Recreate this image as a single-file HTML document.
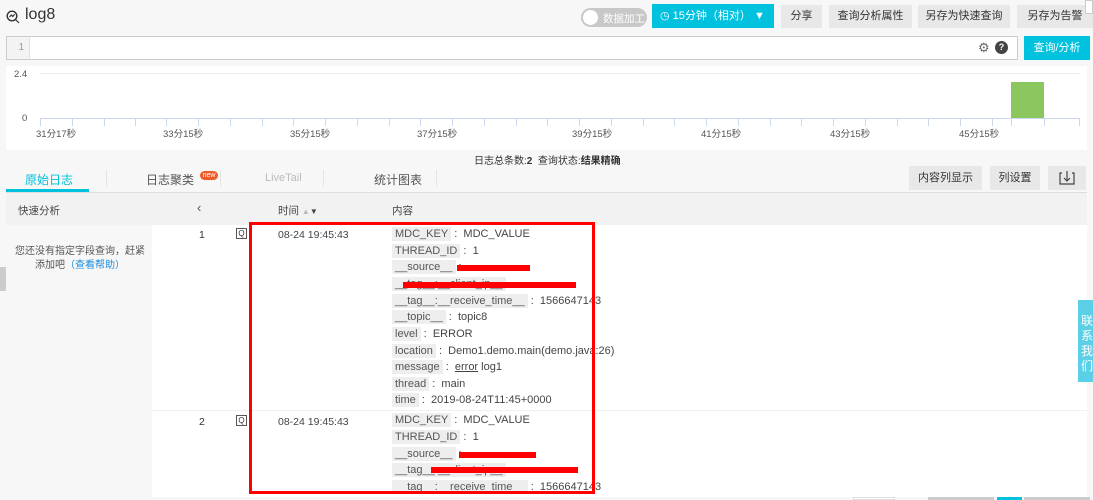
<!DOCTYPE html>
<html><head><meta charset="utf-8"><style>
*{box-sizing:border-box;margin:0;padding:0}
body{width:1093px;height:500px;overflow:hidden;background:#f7f7f7;font-family:"Liberation Sans","Noto Sans CJK SC",sans-serif;font-size:11px;color:#333;position:relative}
.a{position:absolute}
.btn{position:absolute;top:5px;height:23px;background:#e8e8e8;color:#333;font-size:11px;line-height:23px;text-align:center}
.key{background:#eee;padding:1px 3px;color:#555}
.row{position:absolute;left:392px;height:17px;line-height:17px;font-size:11px;color:#444;white-space:nowrap}
.redact{position:absolute;background:#f00;height:6px}
.tick{position:absolute;top:119px;width:1px;height:7px;background:#cdd6ef}
.lbl{position:absolute;top:126px;font-size:9.5px;color:#555}
</style></head><body>
<svg class="a" style="left:6px;top:10px" width="14" height="14" viewBox="0 0 14 14"><circle cx="6" cy="6" r="4.8" fill="none" stroke="#333" stroke-width="1.4"/><path d="M9.5 9.5L13 13M3.5 7l1.8-2 1.5 1.5 1.8-2.2" fill="none" stroke="#333" stroke-width="1.2"/></svg>
<div class="a" style="left:25px;top:6px;font-size:16px;color:#333">log8</div>
<div class="a" style="left:581px;top:8px;width:66px;height:19px;border-radius:10px;background:#c8c8c8"></div>
<div class="a" style="left:583px;top:10px;width:15px;height:15px;border-radius:50%;background:#fff"></div>
<div class="a" style="left:603px;top:11px;color:#fff;font-size:10.5px">数据加工</div>
<div class="a" style="left:652px;top:4px;width:122px;height:24px;background:#00c1de;color:#fff;font-size:11px;line-height:24px;padding-left:8px">&#9719; 15分钟（相对）&nbsp;▼</div>
<div class="btn" style="left:781px;width:41px">分享</div>
<div class="btn" style="left:829px;width:83px">查询分析属性</div>
<div class="btn" style="left:918px;width:92px">另存为快速查询</div>
<div class="btn" style="left:1017px;width:76px">另存为告警</div>
<div class="a" style="left:1085px;top:0;width:8px;height:14px;border:1px solid #ccc;background:#fff"></div>
<div class="a" style="left:6px;top:36px;width:1012px;height:24px;background:#fff;border:1px solid #ccc"></div>
<div class="a" style="left:7px;top:37px;width:23px;height:22px;background:#f3f3f3;border-right:1px solid #e0e0e0;color:#999;text-align:right;padding-right:5px;line-height:22px;font-size:10px">1</div>
<div class="a" style="left:978px;top:40px;font-size:13px;color:#666">⚙</div>
<div class="a" style="left:995px;top:41px;width:13px;height:13px;border-radius:50%;background:#444;color:#fff;font-size:9px;font-weight:bold;text-align:center;line-height:13px">?</div>
<div class="a" style="left:1024px;top:36px;width:66px;height:24px;background:#00c1de;color:#fff;line-height:24px;text-align:center">查询/分析</div>
<div class="a" style="left:6px;top:66px;width:1081px;height:84px;background:#fff"></div>
<div class="a" style="left:14px;top:69px;font-size:9.5px;color:#555">2.4</div>
<div class="a" style="left:22px;top:113px;font-size:9.5px;color:#555">0</div>
<div class="a" style="left:40px;top:73px;width:1040px;height:1px;background:#eee"></div>
<div class="a" style="left:40px;top:118px;width:1040px;height:1px;background:#cdd6ef"></div>
<div class="a" style="left:1011px;top:82px;width:33px;height:36px;background:#8bc65e"></div>
<div class="tick" style="left:40px"></div><div class="tick" style="left:72px"></div><div class="tick" style="left:104px"></div><div class="tick" style="left:135px"></div><div class="tick" style="left:166px"></div><div class="tick" style="left:198px"></div><div class="tick" style="left:230px"></div><div class="tick" style="left:262px"></div><div class="tick" style="left:293px"></div><div class="tick" style="left:325px"></div><div class="tick" style="left:357px"></div><div class="tick" style="left:389px"></div><div class="tick" style="left:420px"></div><div class="tick" style="left:452px"></div><div class="tick" style="left:484px"></div><div class="tick" style="left:516px"></div><div class="tick" style="left:547px"></div><div class="tick" style="left:579px"></div><div class="tick" style="left:611px"></div><div class="tick" style="left:643px"></div><div class="tick" style="left:674px"></div><div class="tick" style="left:706px"></div><div class="tick" style="left:738px"></div><div class="tick" style="left:770px"></div><div class="tick" style="left:801px"></div><div class="tick" style="left:833px"></div><div class="tick" style="left:865px"></div><div class="tick" style="left:897px"></div><div class="tick" style="left:928px"></div><div class="tick" style="left:960px"></div><div class="tick" style="left:992px"></div><div class="tick" style="left:1011px"></div><div class="tick" style="left:1044px"></div><div class="tick" style="left:1079px"></div>
<div class="lbl" style="left:36px">31分17秒</div><div class="lbl" style="left:163px">33分15秒</div><div class="lbl" style="left:290px">35分15秒</div><div class="lbl" style="left:417px">37分15秒</div><div class="lbl" style="left:572px">39分15秒</div><div class="lbl" style="left:701px">41分15秒</div><div class="lbl" style="left:830px">43分15秒</div><div class="lbl" style="left:959px">45分15秒</div>
<div class="a" style="left:474px;top:152px;font-size:10px;color:#333">日志总条数:<b>2</b> &nbsp;查询状态:<b>结果精确</b></div>
<div class="a" style="left:25px;top:171px;font-size:12px;color:#00c1de">原始日志</div>
<div class="a" style="left:6px;top:189px;width:83px;height:3px;background:#00c1de"></div>
<div class="a" style="left:106px;top:170px;width:1px;height:17px;background:#e5e5e5"></div>
<div class="a" style="left:146px;top:171px;font-size:12px;color:#555">日志聚类</div>
<div class="a" style="left:200px;top:171px;width:18px;height:9px;border-radius:5px;background:#f05a28;color:#fff;font-size:7px;line-height:9px;text-align:center">new</div>
<div class="a" style="left:220px;top:170px;width:1px;height:17px;background:#e5e5e5"></div>
<div class="a" style="left:265px;top:172px;font-size:11px;color:#bbb">LiveTail</div>
<div class="a" style="left:323px;top:170px;width:1px;height:17px;background:#e5e5e5"></div>
<div class="a" style="left:374px;top:171px;font-size:12px;color:#555">统计图表</div>
<div class="a" style="left:436px;top:170px;width:1px;height:17px;background:#e5e5e5"></div>
<div class="a" style="left:909px;top:166px;width:73px;height:24px;background:#e8e8e8;text-align:center;line-height:24px">内容列显示</div>
<div class="a" style="left:990px;top:166px;width:50px;height:24px;background:#e8e8e8;text-align:center;line-height:24px">列设置</div>
<svg class="a" style="left:1048px;top:166px" width="38" height="24"><rect width="38" height="24" fill="#e8e8e8"/><path d="M14 7h-2v11h14V7h-2M19 5v10M16 12l3 3 3-3" fill="none" stroke="#444" stroke-width="1.2"/></svg>
<div class="a" style="left:6px;top:192px;width:1081px;height:1px;background:#ddd"></div>
<div class="a" style="left:6px;top:193px;width:147px;height:304px;background:#f7f7f7"></div>
<div class="a" style="left:6px;top:193px;width:146px;height:32px;background:#f2f2f2"></div>
<div class="a" style="left:18px;top:203px;font-size:10.5px;color:#444">快速分析</div>
<div class="a" style="left:152px;top:193px;width:935px;height:32px;background:#f2f2f2"></div>
<div class="a" style="left:152px;top:225px;width:935px;height:272px;background:#fff"></div>
<div class="a" style="left:152px;top:410px;width:935px;height:1px;background:#f0f0f0"></div>
<div class="a" style="left:197px;top:200px;font-size:13px;color:#555">‹</div>
<div class="a" style="left:278px;top:203px;font-size:10.5px;color:#444">时间 <span style="color:#bbb;font-size:8px">▲</span><span style="font-size:8px">▼</span></div>
<div class="a" style="left:392px;top:203px;font-size:10.5px;color:#444">内容</div>
<div class="a" style="left:10px;top:245px;width:140px;text-align:center;font-size:10px;color:#555;line-height:14px;white-space:nowrap">您还没有指定字段查询，赶紧<br>添加吧<span style="color:#1a8ce0">（查看帮助）</span></div>
<div class="a" style="left:0;top:267px;width:6px;height:24px;background:#ccc"></div>
<div class="a" style="left:199px;top:229px;font-size:10.5px">1</div>
<div class="a" style="left:199px;top:416px;font-size:10.5px">2</div>
<div class="a" style="left:236px;top:228px;width:11px;height:11px;border:1px solid #555;font-size:8px;line-height:9px;text-align:center">Q</div>
<div class="a" style="left:236px;top:415px;width:11px;height:11px;border:1px solid #555;font-size:8px;line-height:9px;text-align:center">Q</div>
<div class="a" style="left:278px;top:229px;font-size:10.5px;color:#444">08-24 19:45:43</div>
<div class="a" style="left:278px;top:416px;font-size:10.5px;color:#444">08-24 19:45:43</div>

<div class="row" style="top:226px"><span class="key">MDC_KEY</span> :&nbsp; MDC_VALUE</div>
<div class="row" style="top:243px"><span class="key">THREAD_ID</span> :&nbsp; 1</div>
<div class="row" style="top:259px"><span class="key">__source__</span> :</div>
<div class="redact" style="left:457px;top:265px;width:73px"></div>
<div class="row" style="top:276px"><span class="key">__tag__:__client_ip__</span></div>
<div class="redact" style="left:403px;top:282px;width:173px"></div>
<div class="row" style="top:293px"><span class="key">__tag__:__receive_time__</span> :&nbsp; 1566647143</div>
<div class="row" style="top:309px"><span class="key">__topic__</span> :&nbsp; topic8</div>
<div class="row" style="top:326px"><span class="key">level</span> :&nbsp; ERROR</div>
<div class="row" style="top:343px"><span class="key">location</span> :&nbsp; Demo1.demo.main(demo.java:26)</div>
<div class="row" style="top:359px"><span class="key">message</span> :&nbsp; <u>error</u> log1</div>
<div class="row" style="top:376px"><span class="key">thread</span> :&nbsp; main</div>
<div class="row" style="top:392px"><span class="key">time</span> :&nbsp; 2019-08-24T11:45+0000</div>

<div class="row" style="top:412px"><span class="key">MDC_KEY</span> :&nbsp; MDC_VALUE</div>
<div class="row" style="top:429px"><span class="key">THREAD_ID</span> :&nbsp; 1</div>
<div class="row" style="top:446px"><span class="key">__source__</span> :</div>
<div class="redact" style="left:459px;top:452px;width:77px"></div>
<div class="row" style="top:462px"><span class="key">__tag__:__client_ip__</span></div>
<div class="redact" style="left:431px;top:467px;width:147px"></div>
<div class="row" style="top:479px"><span class="key">__tag__:__receive_time__</span> :&nbsp; 1566647143</div>

<div class="a" style="left:249px;top:222px;width:346px;height:272px;border:3px solid #f00"></div>
<div class="a" style="left:1078px;top:300px;width:15px;height:82px;background:#5bcfe6;color:#fff;font-size:12px;line-height:15px;padding:14px 0 0 3px">联系我们</div>
<div class="a" style="left:853px;top:497px;width:42px;height:3px;background:#fff;border:1px solid #ddd"></div>
<div class="a" style="left:928px;top:497px;width:66px;height:3px;background:#ccc"></div>
<div class="a" style="left:997px;top:497px;width:25px;height:3px;background:#00c1de"></div>
<div class="a" style="left:1024px;top:497px;width:66px;height:3px;background:#ccc"></div>
</body></html>
